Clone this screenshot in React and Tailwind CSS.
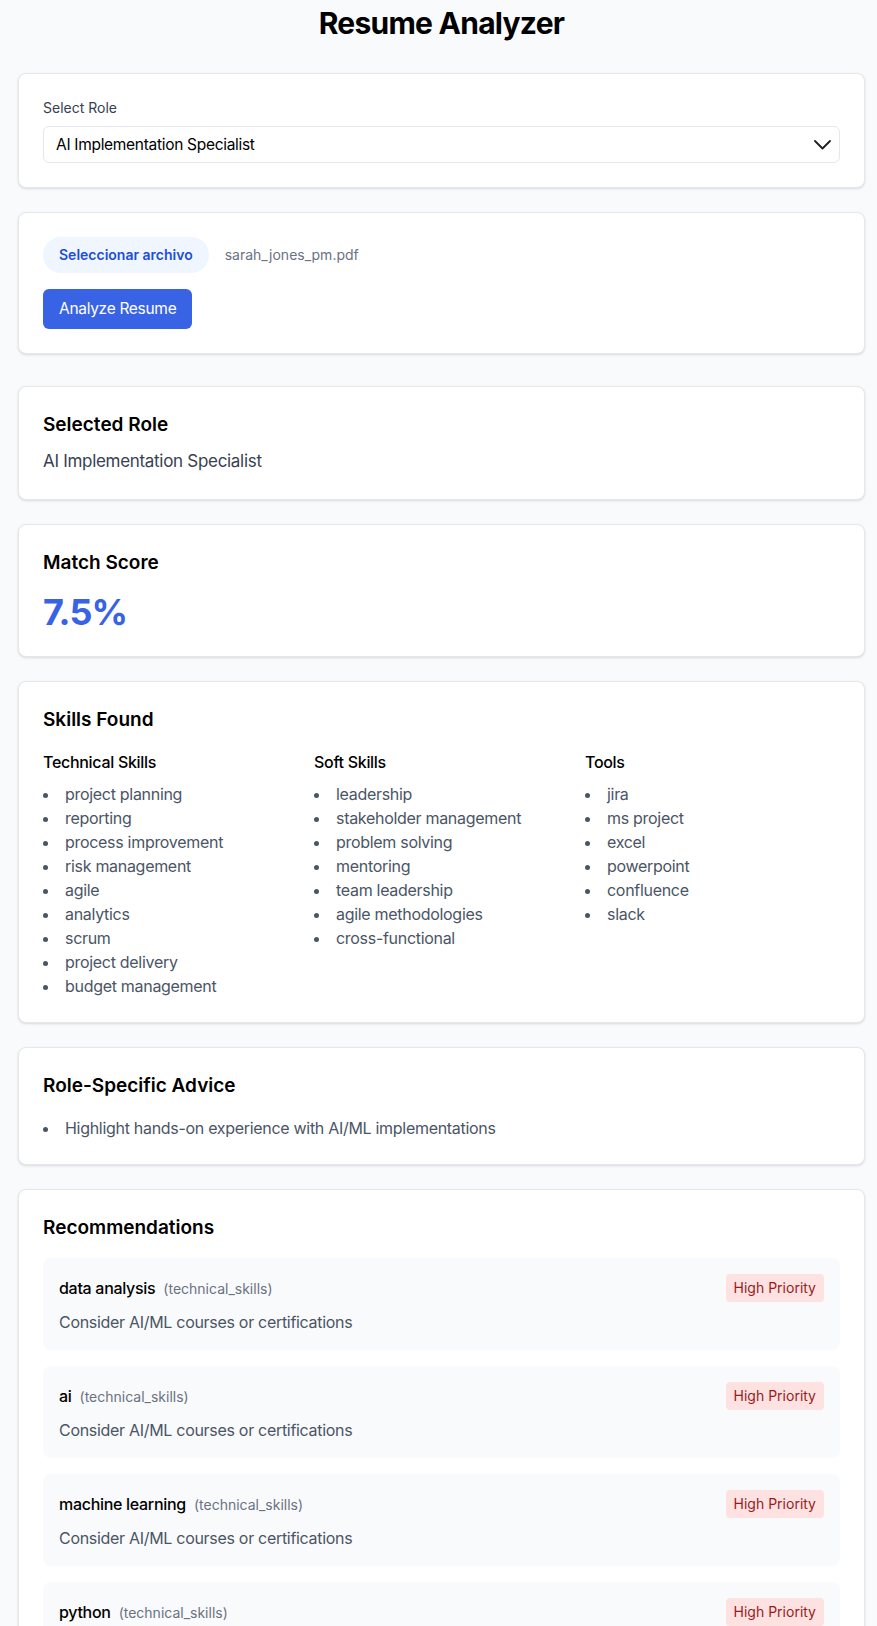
import React from "react";

const skills = {
  "Technical Skills": [
    "project planning",
    "reporting",
    "process improvement",
    "risk management",
    "agile",
    "analytics",
    "scrum",
    "project delivery",
    "budget management",
  ],
  "Soft Skills": [
    "leadership",
    "stakeholder management",
    "problem solving",
    "mentoring",
    "team leadership",
    "agile methodologies",
    "cross-functional",
  ],
  Tools: ["jira", "ms project", "excel", "powerpoint", "confluence", "slack"],
};

const recommendations = [
  { skill: "data analysis", category: "technical_skills" },
  { skill: "ai", category: "technical_skills" },
  { skill: "machine learning", category: "technical_skills" },
  { skill: "python", category: "technical_skills" },
  { skill: "prompt engineering", category: "technical_skills" },
];

const Card = ({ children, className = "" }) => (
  <div
    className={`bg-white rounded-lg border border-gray-200 shadow-sm p-6 ${className}`}
  >
    {children}
  </div>
);

const App = () => {
  return (
    <div className="min-h-screen bg-[#f9fafb] font-['Inter',sans-serif] text-black tracking-[-0.3px]">
      <div className="pl-[18px] pr-[12px] pt-[5px] pb-8">
        {/* Header */}
        <h1 className="text-[30px] leading-9 font-bold text-center tracking-tight mb-8">
          Resume Analyzer
        </h1>

        {/* Role select */}
        <Card className="mb-6">
          <label className="block text-sm leading-5 tracking-normal text-gray-700 mb-2">
            Select Role
          </label>
          <div className="flex items-center justify-between h-[37px] pl-3 pr-2 border border-gray-200 rounded-md bg-white">
            <span className="text-[15.5px] text-black">
              AI Implementation Specialist
            </span>
            <svg width="17" height="10" viewBox="0 0 17 10" fill="none">
              <polyline
                points="1,1 8.5,8.5 16,1"
                stroke="#1f1f1f"
                strokeWidth="1.8"
                strokeLinecap="round"
                strokeLinejoin="round"
              />
            </svg>
          </div>
        </Card>

        {/* Upload */}
        <Card className="mb-8">
          <div className="flex items-center mb-4">
            <span className="inline-flex items-center h-9 px-4 rounded-full bg-[#eff6ff] text-[#1d4ed8] text-sm tracking-normal font-semibold">
              Seleccionar archivo
            </span>
            <span className="ml-4 text-sm tracking-normal text-gray-500">
              sarah_jones_pm.pdf
            </span>
          </div>
          <button className="h-10 px-4 rounded-md bg-[#3763e4] text-white text-[15.5px]">
            Analyze Resume
          </button>
        </Card>

        <div className="space-y-6">
          {/* Selected role */}
          <Card>
            <h2 className="text-[19px] leading-7 font-semibold tracking-normal mb-2">
              Selected Role
            </h2>
            <p className="text-[17px] leading-7 text-gray-700">
              AI Implementation Specialist
            </p>
          </Card>

          {/* Match score */}
          <Card>
            <h2 className="text-[19px] leading-7 font-semibold tracking-normal mb-[15px]">
              Match Score
            </h2>
            <p className="text-4xl leading-10 font-bold tracking-tight text-[#3763e4]">
              7.5%
            </p>
          </Card>

          {/* Skills */}
          <Card>
            <h2 className="text-[19px] leading-7 font-semibold tracking-normal mb-4">
              Skills Found
            </h2>
            <div className="grid grid-cols-3 gap-4">
              {Object.entries(skills).map(([group, items]) => (
                <div key={group}>
                  <h3 className="font-medium leading-6 mb-2">{group}</h3>
                  <ul className="list-disc list-inside text-gray-600 leading-6">
                    {items.map((item) => (
                      <li key={item}>{item}</li>
                    ))}
                  </ul>
                </div>
              ))}
            </div>
          </Card>

          {/* Advice */}
          <Card>
            <h2 className="text-[19px] leading-7 font-semibold tracking-normal mb-4">
              Role-Specific Advice
            </h2>
            <ul className="list-disc list-inside text-gray-600 leading-6">
              <li>Highlight hands-on experience with AI/ML implementations</li>
            </ul>
          </Card>

          {/* Recommendations */}
          <Card>
            <h2 className="text-[19px] leading-7 font-semibold tracking-normal mb-4">
              Recommendations
            </h2>
            <div className="space-y-4">
              {recommendations.map((rec) => (
                <div key={rec.skill} className="bg-[#f9fafb] rounded-lg p-4">
                  <div className="flex items-center justify-between mb-2">
                    <div className="flex items-baseline">
                      <span className="font-medium">{rec.skill}</span>
                      <span className="ml-2 text-sm tracking-normal text-gray-500">
                        ({rec.category})
                      </span>
                    </div>
                    <span className="px-2 py-1 rounded text-sm leading-5 tracking-normal bg-[#fee2e2] text-[#991b1b]">
                      High Priority
                    </span>
                  </div>
                  <p className="text-gray-600 leading-6">
                    Consider AI/ML courses or certifications
                  </p>
                </div>
              ))}
            </div>
          </Card>
        </div>
      </div>
    </div>
  );
};

export default App;
